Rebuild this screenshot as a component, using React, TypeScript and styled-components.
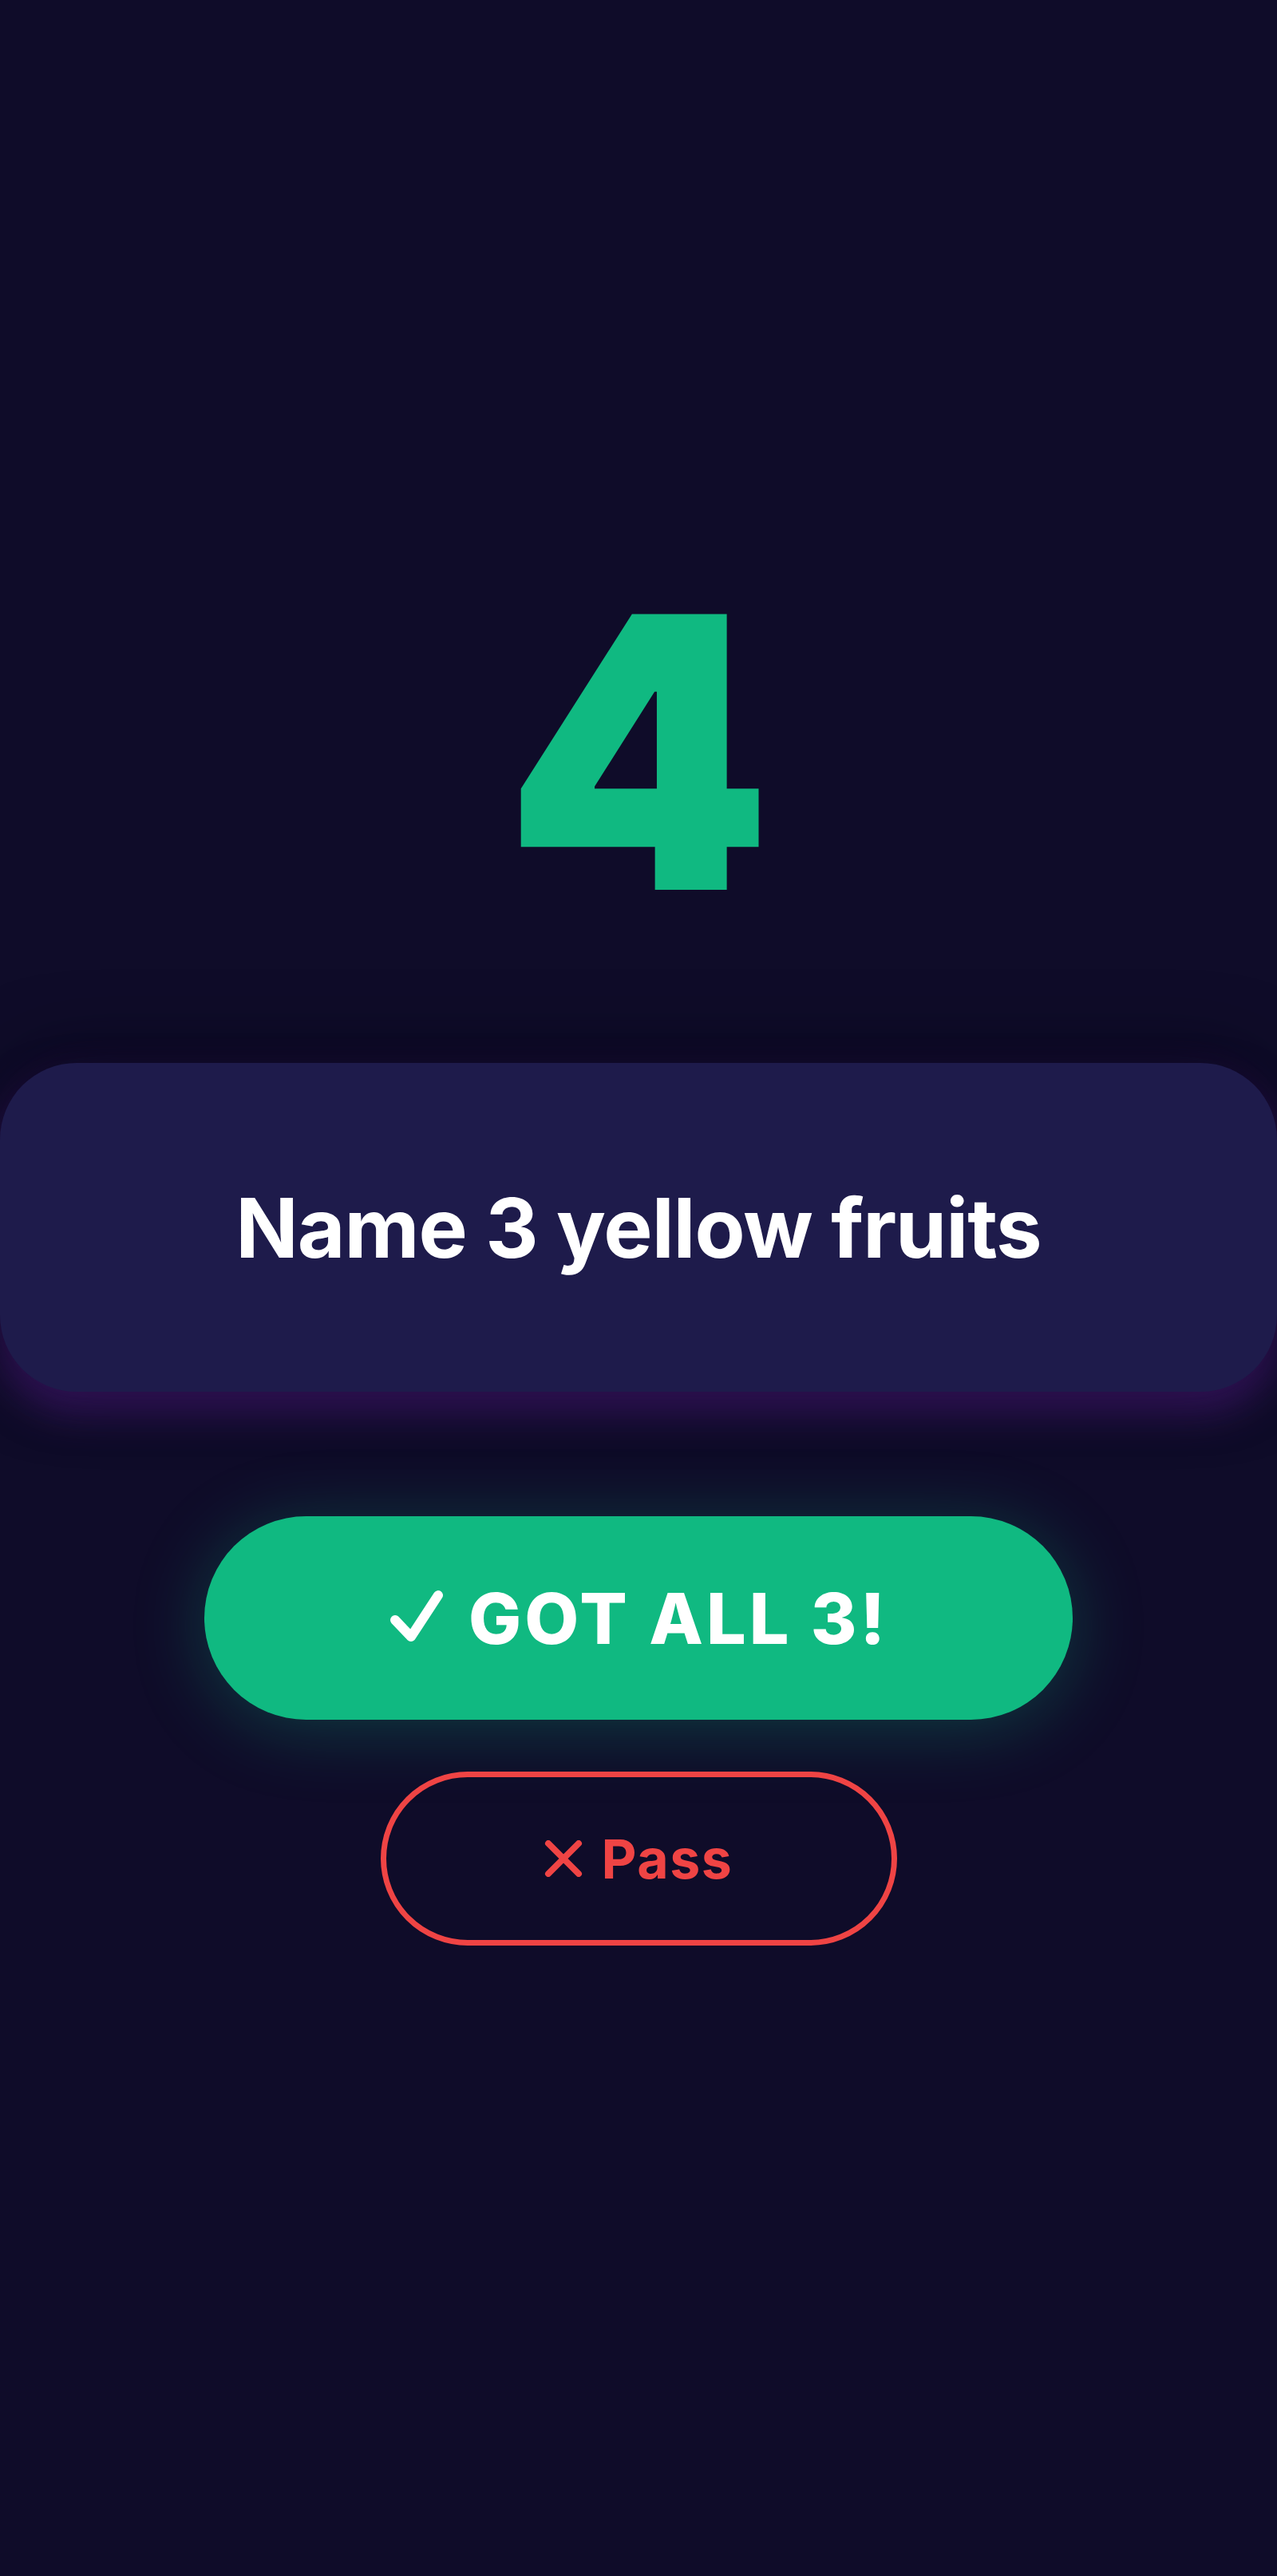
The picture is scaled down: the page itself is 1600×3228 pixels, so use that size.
import styled, { createGlobalStyle } from 'styled-components';

const GlobalStyle = createGlobalStyle`
  html, body {
    margin: 0;
    padding: 0;
    background: #0f0c29;
  }
  body {
    font-family: Inter, 'Noto Sans', 'Liberation Sans', sans-serif;
    -webkit-font-smoothing: antialiased;
  }
`;

function CheckIcon() {
  return (
    <svg width='70' height='66' viewBox='0 0 70 66' fill='none'>
      <polyline
        points='8,38 28,59 62,7'
        stroke='#ffffff'
        strokeWidth='12'
        strokeLinecap='round'
        strokeLinejoin='round'
      />
    </svg>
  );
}

function CrossIcon() {
  return (
    <svg width='48' height='46' viewBox='0 0 48 46' fill='none'>
      <path
        d='M5 4 L43 42 M43 4 L5 42'
        stroke='#ef4444'
        strokeWidth='8'
        strokeLinecap='round'
      />
    </svg>
  );
}

export default function App() {
  return (
    <>
      <GlobalStyle />
      <Screen>
        <Countdown>4</Countdown>
        <PromptCard>
          <PromptText>Name 3 yellow fruits</PromptText>
        </PromptCard>
        <Actions>
          <SuccessButton>
            <CheckIcon />
            GOT ALL 3!
          </SuccessButton>
          <PassButton>
            <CrossIcon />
            Pass
          </PassButton>
        </Actions>
      </Screen>
    </>
  );
}

const Screen = styled.main`
  box-sizing: border-box;
  width: 1600px;
  min-height: 3228px;
  padding-top: 705px;
  display: flex;
  flex-direction: column;
  align-items: center;
  background: #0f0c29;
  overflow: hidden;
`;

const Countdown = styled.div`
  font-family: Inter, 'Liberation Sans', sans-serif;
  font-size: 475px;
  font-weight: 900;
  line-height: 1;
  color: #10b981;
  margin-bottom: 152px;
`;

const PromptCard = styled.section`
  box-sizing: border-box;
  width: 1600px;
  height: 412px;
  display: flex;
  align-items: center;
  justify-content: center;
  background: #1e1b4b;
  border-radius: 96px;
  box-shadow:
    0 -10px 90px rgba(5, 3, 20, 0.6),
    0 22px 50px rgba(107, 33, 168, 0.5);
`;

const PromptText = styled.h2`
  margin: 0;
  font-size: 103px;
  font-weight: 700;
  letter-spacing: -1px;
  color: #ffffff;
`;

const Actions = styled.div`
  display: flex;
  flex-direction: column;
  align-items: center;
  gap: 65px;
  margin-top: 156px;
`;

const PillButton = styled.button`
  display: flex;
  align-items: center;
  justify-content: center;
  box-sizing: border-box;
  border-radius: 999px;
  font-family: Inter, 'Liberation Sans', sans-serif;
  cursor: pointer;
`;

const SuccessButton = styled(PillButton)`
  width: 1088px;
  height: 255px;
  gap: 30px;
  border: none;
  background: #10b981;
  color: #ffffff;
  font-size: 88px;
  font-weight: 800;
  letter-spacing: 4px;
  box-shadow: 0 10px 90px rgba(16, 185, 129, 0.28);

  svg {
    margin-top: -6px;
  }
`;

const PassButton = styled(PillButton)`
  width: 647px;
  height: 218px;
  gap: 24px;
  border: 7px solid #ef4444;
  background: transparent;
  color: #ef4444;
  font-size: 68px;
  font-weight: 700;
  letter-spacing: 1.5px;
`;
